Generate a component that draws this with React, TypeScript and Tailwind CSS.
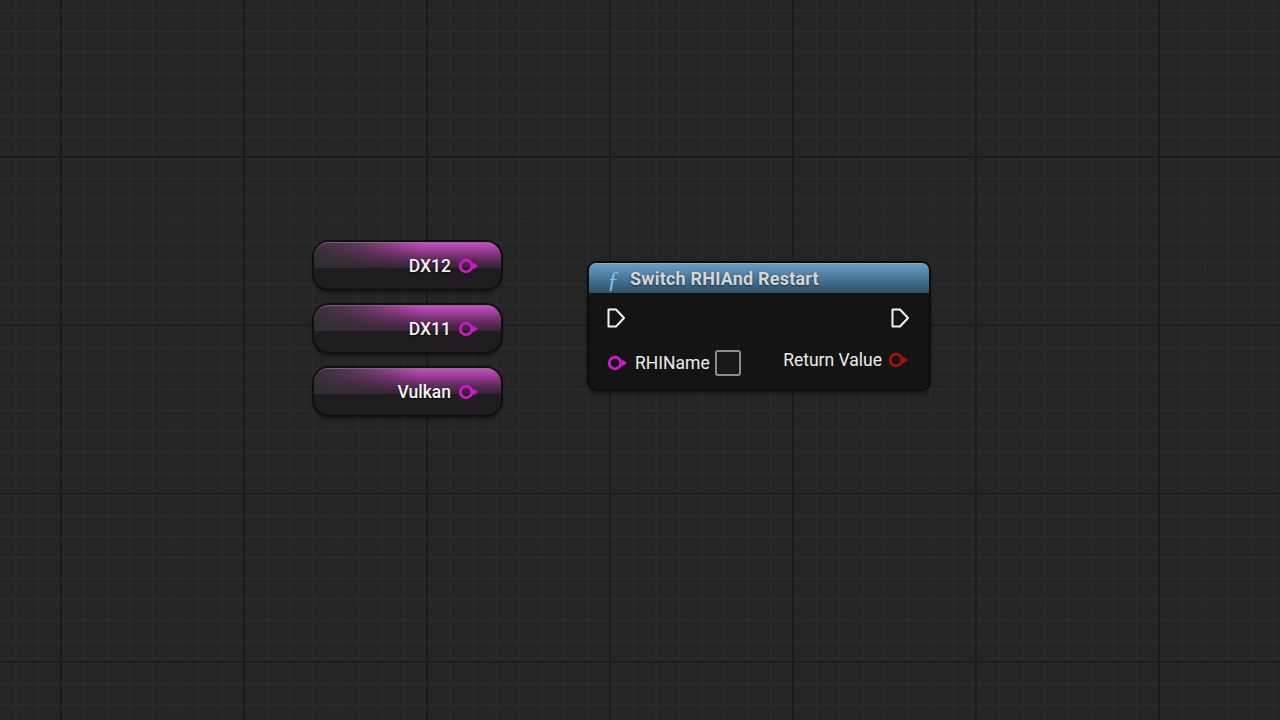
import React from "react";

const MAGENTA = "#d019c6";

function GridBackground() {
  return (
    <svg className="absolute inset-0" width="1280" height="720">
      <defs>
        <pattern id="minor" x="15.25" y="10" width="22.875" height="21.04" patternUnits="userSpaceOnUse">
          <rect x="0" y="0" width="1" height="21.04" fill="#2d2d2d" />
          <rect x="0" y="0" width="22.875" height="1" fill="#2d2d2d" />
        </pattern>
        <pattern id="major" x="60" y="156" width="183" height="168.33" patternUnits="userSpaceOnUse">
          <rect x="0" y="0" width="2" height="168.33" fill="#1b1b1b" />
          <rect x="0" y="0" width="183" height="2" fill="#1b1b1b" />
        </pattern>
      </defs>
      <rect width="1280" height="720" fill="#262626" />
      <rect width="1280" height="720" fill="url(#minor)" />
      <rect width="1280" height="720" fill="url(#major)" />
    </svg>
  );
}

function DataPin({ color }: { color: string }) {
  return (
    <svg width="22" height="18" viewBox="0 0 22 18">
      <circle cx="8" cy="9" r="5.8" fill="none" stroke={color} strokeWidth="2.8" />
      <path d="M14.8 5.2 L20 9 L14.8 12.8 Z" fill={color} />
    </svg>
  );
}

function ExecPin() {
  return (
    <svg width="21" height="22" viewBox="0 0 21 22">
      <path
        d="M2.5 2.5 H10 L18 11 L10 19.5 H2.5 Z"
        fill="none"
        stroke="#f2f2f2"
        strokeWidth="2"
        strokeLinejoin="round"
      />
    </svg>
  );
}

function EnumLiteral({ label, top }: { label: string; top: number }) {
  return (
    <div
      className="absolute left-[314px] w-[187px] h-[47px] rounded-[15px] bg-[#1f1d1f] overflow-hidden shadow-[0_0_0_2px_#101010,0_3px_5px_rgba(0,0,0,0.6)]"
      style={{ top }}
    >
      <div className="absolute inset-x-0 top-0 h-[26px] bg-[linear-gradient(to_bottom,#c952c4_0%,#a03c9a_30%,#5a2a56_70%,#342434_100%)]" />
      <div className="absolute inset-x-0 top-0 h-[26px] bg-[linear-gradient(to_right,rgba(50,46,50,0.95)_0%,rgba(50,46,50,0.65)_25%,rgba(50,46,50,0)_58%)]" />
      <div className="absolute inset-0 rounded-[15px] border-t border-[#7a7a7a]/70" />
      <div className="relative flex h-full items-center justify-end gap-[7px] pr-[21px] pt-[1px]">
        <span className="text-[17.5px] font-medium text-[#f4f4f4] [font-family:Roboto,'Liberation_Sans',sans-serif] [text-shadow:0_1px_2px_rgba(0,0,0,0.8)]">
          {label}
        </span>
        <DataPin color={MAGENTA} />
      </div>
    </div>
  );
}

function FunctionNode() {
  return (
    <div className="absolute left-[589px] top-[263px] w-[340px] h-[126px] rounded-[7px] bg-[#141414] shadow-[0_0_0_2px_#0c0c0c,0_3px_6px_rgba(0,0,0,0.6)] overflow-hidden [font-family:Roboto,'Liberation_Sans',sans-serif]">
      <div className="flex h-[30px] items-center gap-[11px] pl-[18px] bg-[linear-gradient(to_bottom,#6a9cc0_0%,#4a7a9c_45%,#2e5068_100%)] border-t border-[#8ab0c8]">
        <span className="text-[24px] italic text-[#7ec0f0] [font-family:'Liberation_Serif',serif] leading-none">ƒ</span>
        <span className="text-[18px] font-bold text-[#d6d6d6] tracking-[0.2px] [text-shadow:0_1px_2px_rgba(0,0,0,0.6)]">
          Switch RHIAnd Restart
        </span>
      </div>
      <div className="flex items-center justify-between pl-[17px] pr-[18px] pt-[14px]">
        <ExecPin />
        <ExecPin />
      </div>
      <div className="flex items-start justify-between pl-[18px] pr-[19px] pt-[21px]">
        <div className="flex items-center gap-[6px]">
          <DataPin color={MAGENTA} />
          <span className="text-[17.5px] text-[#ececec]">RHIName</span>
          <div className="-ml-[1px] w-[26px] h-[26px] rounded-[3px] border-2 border-[#8c8c8c] bg-[#181818]" />
        </div>
        <div className="flex items-center gap-[6px] -mt-[3px]">
          <span className="text-[17.5px] text-[#ececec]">Return Value</span>
          <DataPin color="#a3100f" />
        </div>
      </div>
    </div>
  );
}

export default function App() {
  return (
    <div className="relative w-[1280px] h-[720px] overflow-hidden bg-[#262626]">
      <GridBackground />
      <EnumLiteral label="DX12" top={242} />
      <EnumLiteral label="DX11" top={305} />
      <EnumLiteral label="Vulkan" top={368} />
      <FunctionNode />
    </div>
  );
}
